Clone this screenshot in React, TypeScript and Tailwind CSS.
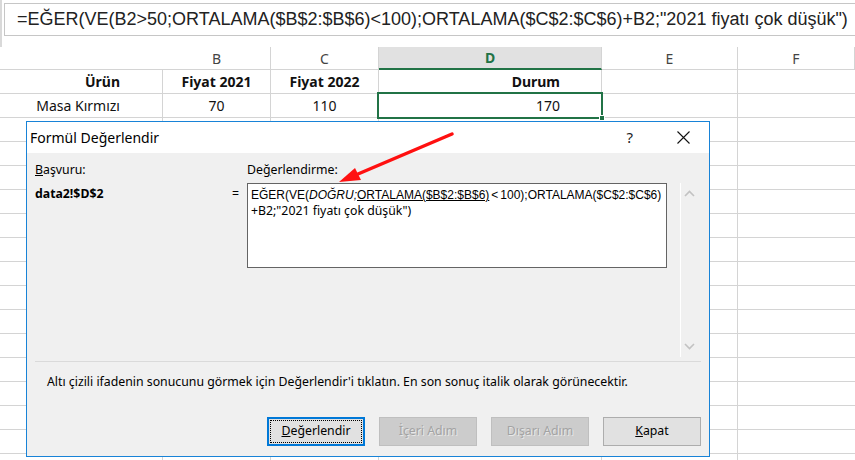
import React from "react";

const COLS = "grid-cols-[163px_108px_108px_223px_136px_1fr]";
const sheetFont = { fontFamily: "'Noto Sans', 'Open Sans', sans-serif" };
const uiFont = { fontFamily: "'Noto Sans', 'Open Sans', sans-serif" };

function HeaderRow() {
  const letters = ["", "B", "C", "D", "E", "F"];
  return (
    <div className={`grid ${COLS} h-[23px]`}>
      {letters.map((l, i) =>
        l === "D" ? (
          <div
            key={i}
            className="flex items-center justify-center border-r border-b-2 border-r-[#d4d4d4] border-b-[#217346] bg-[#e1e1e1] text-[14px] font-bold text-[#217346]"
          >
            {l}
          </div>
        ) : (
          <div
            key={i}
            className={`flex items-center justify-center border-b border-[#d4d4d4] text-[14px] text-[#444] ${i > 0 ? "border-r" : ""}`}
          >
            {l}
          </div>
        )
      )}
    </div>
  );
}

function Row({ cells }: { cells: React.ReactNode[] }) {
  return (
    <div className={`grid ${COLS} h-[24px] text-[14px] text-[#111]`}>
      {cells.map((c, i) => (
        <div
          key={i}
          className={`flex items-center border-b border-[#d4d4d4] ${i < 5 ? "border-r" : ""} ${
            i === 0 ? "justify-end pr-[42px]" : i === 3 ? "justify-end pr-[41px]" : "justify-center"
          }`}
        >
          {c}
        </div>
      ))}
    </div>
  );
}

function Btn({
  children,
  focused,
  disabled,
}: {
  children: React.ReactNode;
  focused?: boolean;
  disabled?: boolean;
}) {
  if (focused)
    return (
      <div className="flex h-[29px] w-[98px] items-center justify-center border-2 border-[#0078d7] bg-[#e1e1e1] p-[1px]">
        <div className="flex h-full w-full items-center justify-center border border-dotted border-black text-[12.3px] text-black">
          {children}
        </div>
      </div>
    );
  return (
    <div
      className={`flex h-[29px] w-[98px] items-center justify-center border text-[12.3px] ${
        disabled
          ? "border-[#bfbfbf] bg-[#cccccc] text-[#a3a3a3] [text-shadow:1px_1px_0_#e8e8e8]"
          : "border-[#adadad] bg-[#e1e1e1] text-black"
      }`}
    >
      {children}
    </div>
  );
}

function Dialog() {
  return (
    <div
      className="absolute left-[26px] top-[121px] flex h-[336px] w-[684px] flex-col border border-[#1883d7] bg-[#f0f0f0]"
      style={uiFont}
    >
      <div className="flex h-[31px] items-center bg-white pl-[3px] pr-[19px]">
        <span className="text-[14px] text-black">Formül Değerlendir</span>
        <span className="ml-auto mr-[44px] text-[15px] text-[#222]">?</span>
        <svg width="13" height="13" viewBox="0 0 13 13">
          <path d="M0.5 0.5 L12.5 12.5 M12.5 0.5 L0.5 12.5" stroke="#111" strokeWidth="1.1" />
        </svg>
      </div>

      <div className="flex pl-[8px] pt-[8px]">
        <div className="flex w-[197px] flex-col">
          <div className="h-[17px] text-[12.3px] leading-[17px] text-black">
            <span className="underline">B</span>aşvuru:
          </div>
          <div className="mt-[7px] text-[12.3px] font-bold leading-[17px] text-black">data2!$D$2</div>
        </div>
        <div className="w-[15px] pt-[24px] text-[12.3px] leading-[17px] text-black">=</div>
        <div className="flex flex-col">
          <div className="h-[17px] text-[12.3px] leading-[17px] text-black">
            De<span className="underline">ğ</span>erlendirme:
          </div>
          <div className="mt-[5px] flex">
            <div className="h-[85px] w-[420px] whitespace-nowrap border border-[#646464] bg-white px-[3px] pt-[3px] leading-[16px] text-black">
              <div className="text-[12px]" style={{ fontFamily: "'Liberation Sans', Arial, sans-serif" }}>
                EĞER(VE(<i>DOĞRU;</i>
                <span className="underline">ORTALAMA($B$2:$B$6)</span>
                <span className="mx-[2px]">&lt;</span>100);ORTALAMA($C$2:$C$6)
              </div>
              <div className="text-[12.3px]">+B2;"2021 fiyatı çok düşük")</div>
            </div>
            <div className="ml-[13px] flex h-[174px] w-[17px] flex-col items-center justify-between border-l border-white py-[7px]">
              <svg width="11" height="7" viewBox="0 0 11 7">
                <path d="M1 6 L5.5 1.5 L10 6" fill="none" stroke="#c2c2c2" strokeWidth="1.6" />
              </svg>
              <svg width="11" height="7" viewBox="0 0 11 7">
                <path d="M1 1 L5.5 5.5 L10 1" fill="none" stroke="#c2c2c2" strokeWidth="1.6" />
              </svg>
            </div>
          </div>
        </div>
      </div>

      <div className="ml-[8px] mt-[4px] h-px w-[666px] bg-[#dadada]" />

      <div className="ml-[20px] mt-[11px] text-[12.3px] leading-[17px] text-black">
        Altı çizili ifadenin sonucunu görmek için Değerlendir'i tıklatın. En son sonuç italik olarak görünecektir.
      </div>

      <div className="mt-auto mb-[10px] flex justify-end gap-[14px] pr-[8px]">
        <Btn focused>
          <span className="underline">D</span>eğerlendir
        </Btn>
        <Btn disabled>İçeri Adım</Btn>
        <Btn disabled>Dışarı Adım</Btn>
        <Btn>
          <span className="underline">K</span>apat
        </Btn>
      </div>
    </div>
  );
}

export default function App() {
  const empty = Array.from({ length: 15 });
  return (
    <div className="relative h-[460px] w-[855px] overflow-hidden bg-white" style={sheetFont}>
      <div className="flex h-[47px] border-l-2 border-[#d9d9d9] pt-[3px] pl-[2px]">
        <div
          className="flex h-[33px] flex-1 items-center border-y border-l border-[#c6c6c6] pl-[12px] text-[18px] whitespace-nowrap text-[#222]"
          style={{ fontFamily: "'Liberation Sans', Arial, sans-serif" }}
        >
          =EĞER(VE(B2&gt;50;ORTALAMA($B$2:$B$6)&lt;100);ORTALAMA($C$2:$C$6)+B2;"2021 fiyatı çok düşük")
        </div>
      </div>

      <HeaderRow />
      <Row
        cells={[
          <b key="a">Ürün</b>,
          <b key="b">Fiyat 2021</b>,
          <b key="c">Fiyat 2022</b>,
          <b key="d">Durum</b>,
          "",
          "",
        ]}
      />
      <Row cells={["Masa Kırmızı", "70", "110", "170", "", ""]} />
      {empty.map((_, i) => (
        <Row key={i} cells={["", "", "", "", "", ""]} />
      ))}

      {/* selected cell D2 */}
      <div className="absolute left-[377px] top-[92px] h-[27px] w-[226px] border-2 border-[#217346]" />
      <div className="absolute left-[599px] top-[115px] h-[6px] w-[6px] border border-white bg-[#217346]" />

      <Dialog />

      <svg className="pointer-events-none absolute left-0 top-0" width="855" height="460">
        <line x1="452" y1="134" x2="358" y2="174" stroke="#ff1010" strokeWidth="3.5" strokeLinecap="round" />
        <polygon points="339,182 361,180 355,168" fill="#ff1010" />
      </svg>
    </div>
  );
}
